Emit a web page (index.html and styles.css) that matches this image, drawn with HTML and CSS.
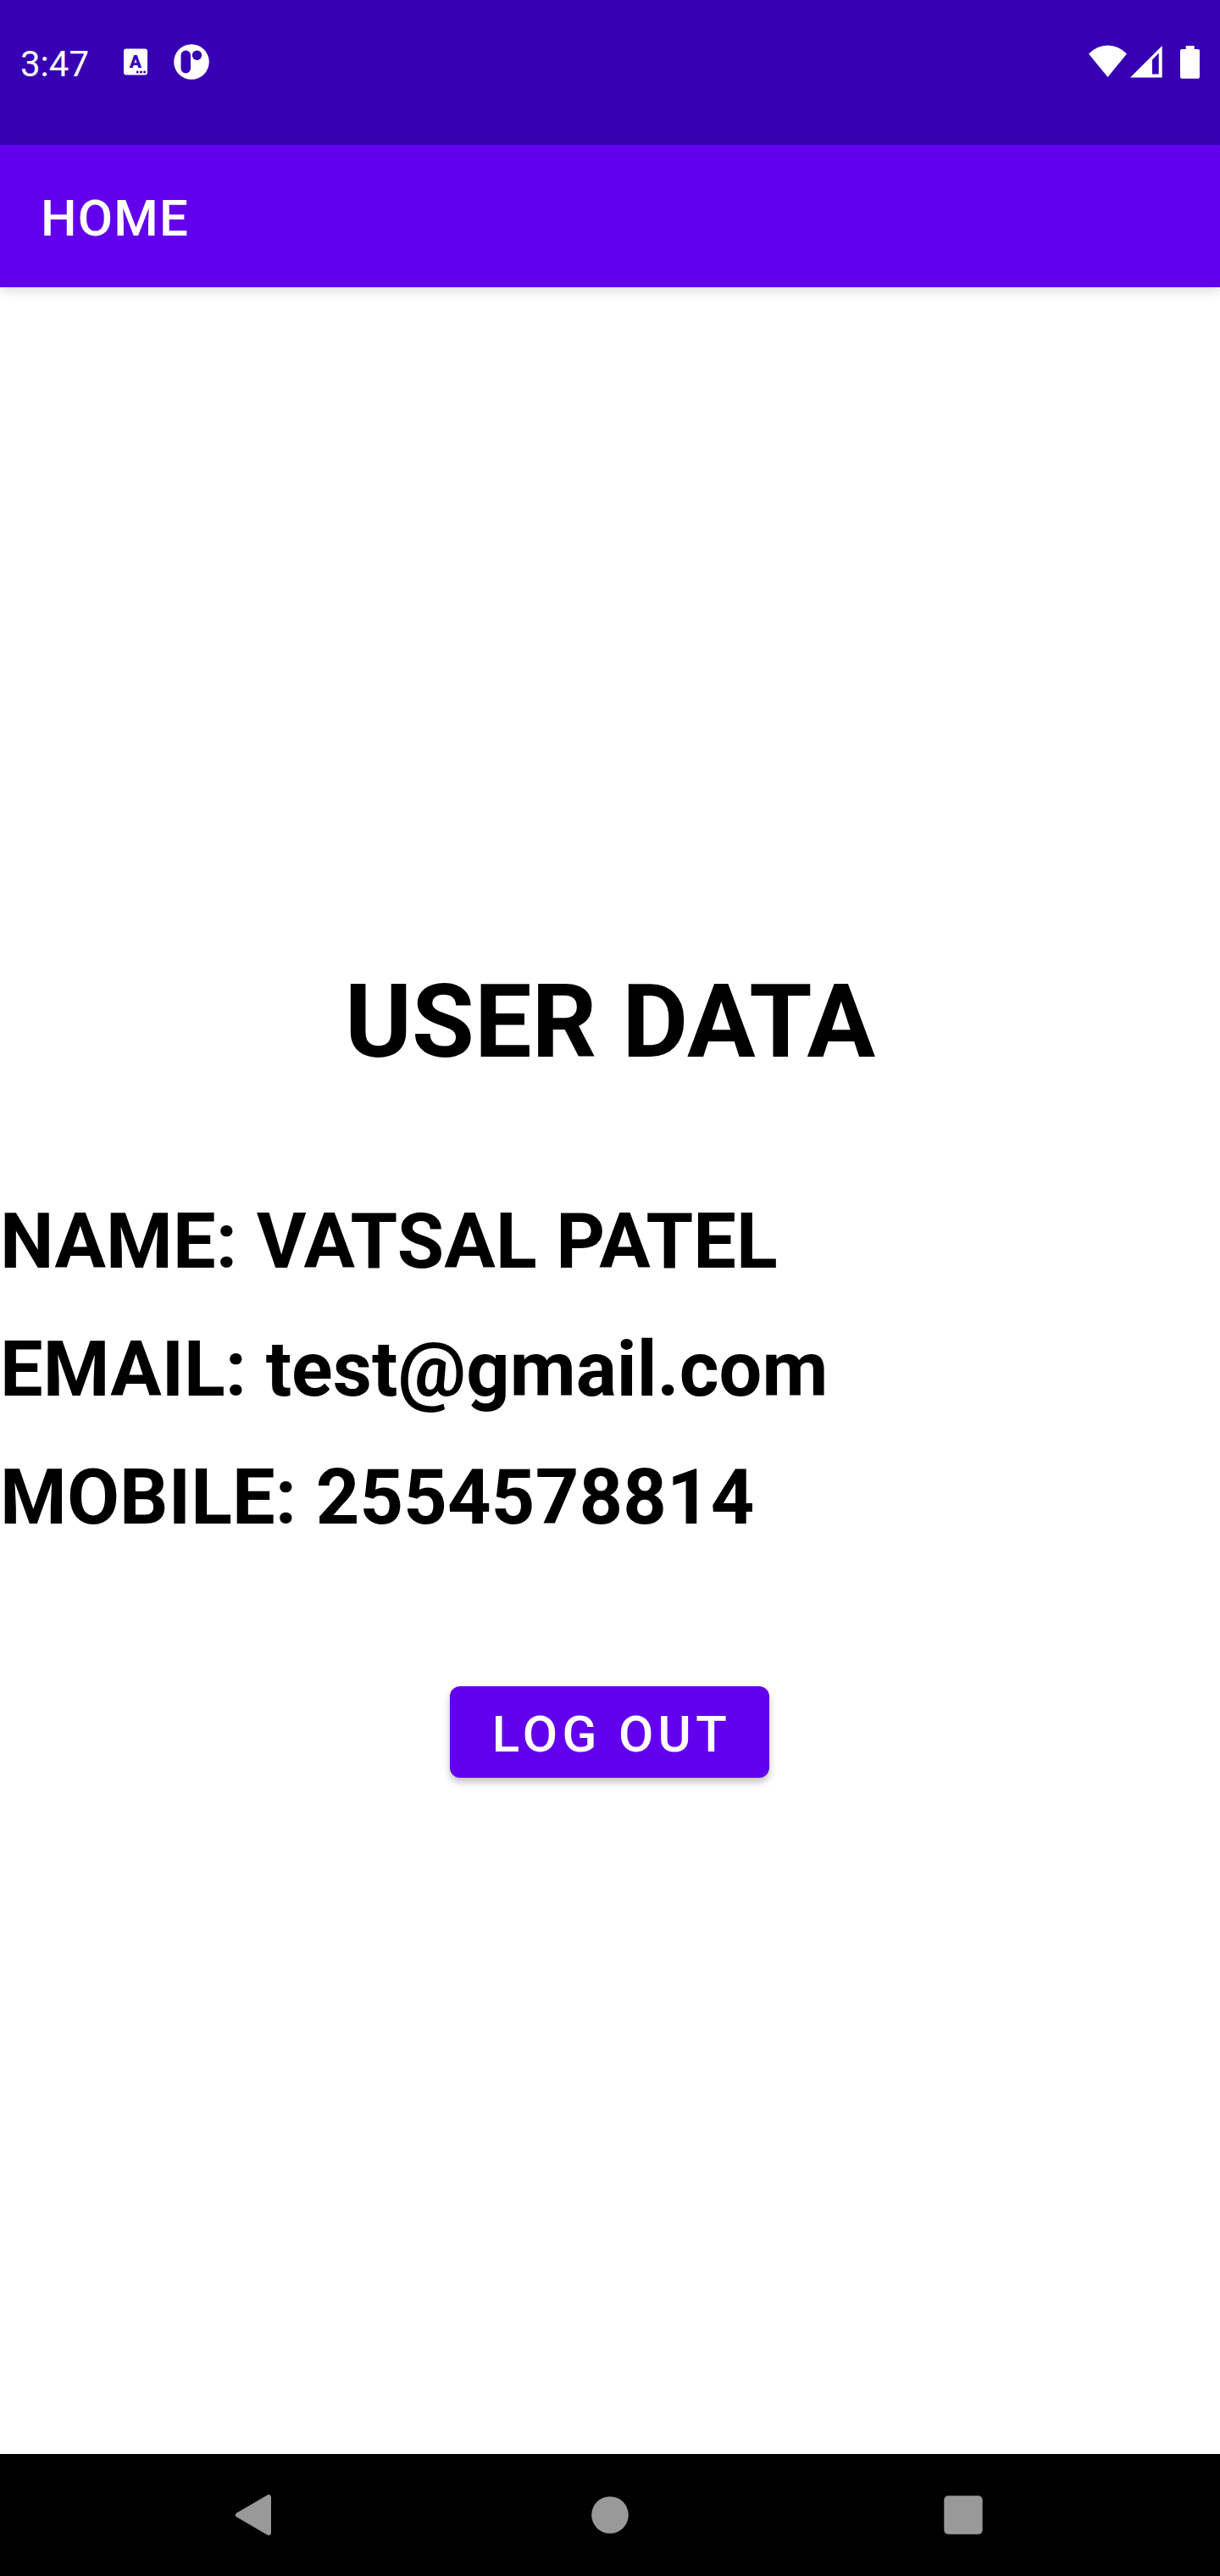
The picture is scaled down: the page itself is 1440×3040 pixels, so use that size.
FILE: index.html
```html
<!DOCTYPE html>
<html lang="en">
<head>
<meta charset="utf-8">
<title>Home</title>
<link rel="stylesheet" href="styles.css">
</head>
<body>
<div class="screen">
  <div class="status-bar">
    <div class="status-left">
      <span class="clock">3:47</span>
      <svg class="icon-input" width="28" height="32" viewBox="0 0 28 32">
        <rect y="0.5" width="28" height="31" rx="3" fill="#fff"/>
        <text class="input-letter" x="14" y="23" text-anchor="middle">A</text>
        <g fill="#3700b3"><circle cx="16.2" cy="28" r="1.5"/><circle cx="20.5" cy="28" r="1.5"/><circle cx="24.6" cy="28" r="1.5"/></g>
      </svg>
      <svg class="icon-app" width="42" height="42" viewBox="0 0 42 42">
        <circle cx="21" cy="21" r="20.8" fill="#fff"/>
        <rect x="8.5" y="7.5" width="11.5" height="27" rx="5.75" fill="#3700b3"/>
        <circle cx="27.5" cy="13.3" r="5.7" fill="#3700b3"/>
      </svg>
    </div>
    <div class="status-right">
      <svg class="icon-wifi" width="46" height="40" viewBox="0 0 46 40"><path d="M0 10.5Q10 .5 22.5 .5T45 10.5L22.5 38Z" fill="#fff"/></svg>
      <svg class="icon-signal" width="38" height="40" viewBox="0 0 38 40"><path fill-rule="evenodd" d="M0 38.5L37.7 1V38.5ZM26 17.5V34.5H33.7V9.8Z" fill="#fff"/></svg>
      <svg class="icon-battery" width="23" height="40" viewBox="0 0 23 40"><path d="M6.7 1H16.7V5H21Q23 5 23 7V37.5Q23 39.7 21 39.7H2Q0 39.7 0 37.5V7Q0 5 2 5H6.7Z" fill="#fff"/></svg>
    </div>
  </div>
  <header class="toolbar"><h1 class="toolbar-title">HOME</h1></header>
  <main class="content">
    <h2 class="heading">USER DATA</h2>
    <div class="details">
      <div>NAME: VATSAL PATEL</div>
      <div class="email">EMAIL: test@gmail.com</div>
      <div>MOBILE: 2554578814</div>
    </div>
    <button class="logout">LOG OUT</button>
  </main>
  <nav class="nav-bar">
    <svg width="48" height="48" viewBox="0 0 48 48"><path d="M6 24L42 3V45Z" fill="#999" stroke="#999" stroke-width="6" stroke-linejoin="round"/></svg>
    <svg width="48" height="48" viewBox="0 0 48 48"><circle cx="24" cy="24" r="21.8" fill="#999"/></svg>
    <svg width="48" height="48" viewBox="0 0 48 48"><rect x="1.3" y="1.3" width="45.4" height="45.4" rx="5" fill="#999"/></svg>
  </nav>
</div>
</body>
</html>
```
FILE: styles.css
```css
* { box-sizing: border-box; }
body { margin: 0; background: #fff; color: #000; font-family: Roboto, sans-serif; }
.screen { width: 1440px; height: 3040px; display: flex; flex-direction: column; overflow: hidden; }
.status-bar { height: 171px; flex: none; padding: 50px 24px 0; display: flex; justify-content: space-between; align-items: flex-start; background: #3700b3; color: #fff; }
.status-left, .status-right { display: flex; align-items: center; height: 46px; }
.clock { width: 98px; font-size: 42px; line-height: 48px; padding-top: 6px; white-space: nowrap; }
.icon-input { margin-left: 24px; }
.input-letter { font-family: Roboto, sans-serif; font-size: 21px; font-weight: 900; fill: #3700b3; }
.icon-app { margin-left: 31px; }
.icon-signal { margin-left: 3px; }
.icon-battery { margin-left: 21px; }
.toolbar { position: relative; height: 168px; flex: none; padding: 0 48px; display: flex; align-items: center; background: #6200ee; color: #fff; box-shadow: 0 3px 14px rgba(0, 0, 0, .16); }
.toolbar-title { margin: 6px 0 0; font-size: 60px; line-height: 70px; font-weight: 500; letter-spacing: 1.2px; }
.content { flex: 1; padding-top: 797px; display: flex; flex-direction: column; align-items: center; }
.heading { margin: 0 0 113px; font-size: 120px; line-height: 141px; font-weight: 700; }
.details { align-self: stretch; font-size: 90px; line-height: 151px; font-weight: 700; letter-spacing: .14px; white-space: nowrap; }
.email { letter-spacing: .03px; }
.logout { width: 377px; height: 108px; margin: 147px 1px 0 0; padding: 6px 0 0 5px; border: 0; border-radius: 12px; background: #6200ee; color: #fff; font: 500 60px/70px Roboto, sans-serif; letter-spacing: 5.36px; box-shadow: 0 5px 8px rgba(0, 0, 0, .25); }
.nav-bar { height: 144px; flex: none; padding: 0 279px 0 275px; display: grid; grid-template-columns: 421px 417px 48px; align-content: center; background: #000; }
.nav-bar svg { overflow: visible; }
```
